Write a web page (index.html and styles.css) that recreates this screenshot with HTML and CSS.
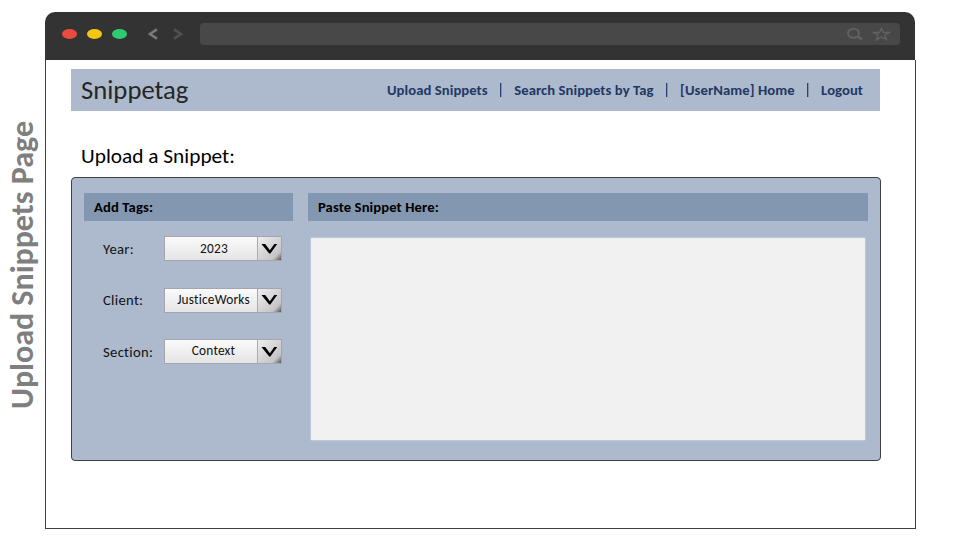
FILE: index.html
```html
<!DOCTYPE html>
<html lang="en">
<head>
<meta charset="utf-8">
<title>Snippetag</title>
<link rel="stylesheet" href="styles.css">
</head>
<body>
<div class="stage">
  <aside class="side-title"><span>Upload Snippets Page</span></aside>
  <div class="browser">
    <div class="chrome">
      <i class="dot red"></i><i class="dot yellow"></i><i class="dot green"></i>
      <svg class="arrows" width="37" height="12" viewBox="0 0 37 12" fill="none" stroke-width="2.6">
        <path d="M10 1.300 3 6l7 4.700" stroke="#7a7a7a"/>
        <path d="M27 1.300 34 6 27 10.700" stroke="#505050"/>
      </svg>
      <div class="address">
        <svg width="46" height="14" viewBox="0 0 46 14" fill="none" stroke="#626262">
          <ellipse cx="7.500" cy="6.300" rx="5.500" ry="4.500" stroke-width="2"/>
          <path d="M11.500 9.500l4.500 3" stroke-width="2.400"/>
          <path d="M35.500 1.500l2.100 4h5.700l-4.400 2.700 1.600 4.400-5-2.600-5 2.600 1.600-4.400-4.400-2.700h5.700z" stroke-width="1.300"/>
        </svg>
      </div>
    </div>
    <main class="page">
      <header class="topbar">
        <div class="brand">Snippetag</div>
        <nav class="nav">
          <a>Upload Snippets</a><i></i><a>Search Snippets by Tag</a><i></i><a>[UserName] Home</a><i></i><a>Logout</a>
        </nav>
      </header>
      <h1>Upload a Snippet:</h1>
      <section class="panel">
        <div class="tags">
          <h2>Add Tags:</h2>
          <div class="field"><label>Year:</label><div class="select"><span>2023</span><b><svg width="17" height="12" viewBox="0 0 17 12"><path d="M.5 1h3.700l4.700 6.200L13.300 1h2.900L9.400 10.500H8.200z"/></svg></b></div></div>
          <div class="field"><label class="up">Client:</label><div class="select raised"><span>JusticeWorks</span><b><svg width="17" height="12" viewBox="0 0 17 12"><path d="M.5 1h3.700l4.700 6.200L13.300 1h2.900L9.400 10.500H8.200z"/></svg></b></div></div>
          <div class="field"><label>Section:</label><div class="select raised"><span>Context</span><b><svg width="17" height="12" viewBox="0 0 17 12"><path d="M.5 1h3.700l4.700 6.200L13.300 1h2.900L9.400 10.500H8.200z"/></svg></b></div></div>
        </div>
        <div class="paste">
          <h2>Paste Snippet Here:</h2>
          <div class="editor"></div>
        </div>
      </section>
    </main>
  </div>
</div>
</body>
</html>
```
FILE: styles.css
```css
* { box-sizing: border-box; }
body { margin: 0; background: #fff; color: #111; font-family: Carlito, Calibri, Lato, sans-serif; font-variant-ligatures: none; }
h1, h2 { margin: 0; }
.stage { display: flex; width: 960px; height: 540px; padding-top: 12px; overflow: hidden; }
.side-title { width: 45px; height: 505px; padding-left: 1px; display: flex; align-items: center; justify-content: center; }
.side-title span { writing-mode: vertical-rl; transform: rotate(180deg); font-size: 32px; line-height: 38px; font-weight: 700; color: #7f7f7f; white-space: nowrap; }
.browser { width: 871px; height: 517px; display: flex; flex-direction: column; }
.chrome { width: 870px; height: 48px; background: #333; border-radius: 10px 10px 0 0; display: flex; align-items: center; padding: 0 15px 4px 17px; }
.dot { width: 15px; height: 10px; border-radius: 50%; margin-right: 10px; }
.red { background: #e94b3c; }
.yellow { background: #f3c614; }
.green { background: #2ecc71; }
.arrows { margin: 0 16px 0 10px; }
.address { flex: 1; height: 22px; border-radius: 4px; background: #484848; display: flex; justify-content: flex-end; align-items: center; padding-right: 8px; }
.page { flex: 1; border: 1px solid #404040; border-top: 0; padding: 9px 34px 0 25px; }
.topbar { height: 42px; width: 809px; background: #adb9cc; display: flex; align-items: center; padding: 0 17px 0 10px; }
.brand { font-size: 26.670px; line-height: 42px; color: #262626; }
.nav { margin-left: auto; display: flex; align-items: center; color: #203864; font-size: 14.670px; letter-spacing: .07px; font-weight: 700; white-space: nowrap; }
.nav i { width: 2px; height: 14px; margin: 0 12.500px 0 12px; background: linear-gradient(90deg, #2c4370 50%, #8292ad 50%); }
h1 { height: 66px; padding: 32px 0 0 10px; font-size: 21.330px; line-height: 26px; font-weight: 400; white-space: nowrap; color: #000; }
.panel { width: 810px; height: 284px; border: 1px solid #404040; border-radius: 4px; background: #adb9cc; display: flex; padding: 15px 12px 0; gap: 15px; }
.tags { width: 209px; flex: none; }
.paste { width: 560px; flex: none; }
h2 { height: 28px; background: #8497b0; padding-left: 10px; font-size: 14.670px; line-height: 29px; letter-spacing: .1px; color: #000; white-space: nowrap; }
.field { display: flex; height: 25px; margin: 15px 0 26.500px 19px; align-items: center; font-size: 14.670px; letter-spacing: .3px; }
.field + .field { margin-top: 0; }
.field label { width: 61px; padding-top: 1px; white-space: nowrap; }
.field label.up { padding-top: 0; padding-bottom: 1px; }
.select { width: 118px; height: 25px; display: flex; border: 1px solid #a3a7ad; background: linear-gradient(#fafafa, #e5e5e5); font-size: 13.330px; letter-spacing: .2px; }
.select span { flex: 1; text-align: center; line-height: 24px; padding-left: 6px; white-space: nowrap; }
.raised span { line-height: 22px; padding-left: 5px; }
.select b { width: 24px; border-left: 1px solid #aaa; background: linear-gradient(135deg, #eee 0%, #c5c5c5 80%, #555 100%); display: flex; align-items: center; justify-content: center; }
.editor { width: 554px; height: 202px; margin: 17px 0 0 3px; background: #f1f1f1; box-shadow: 0 0 2px #e2e6eb; }
```
